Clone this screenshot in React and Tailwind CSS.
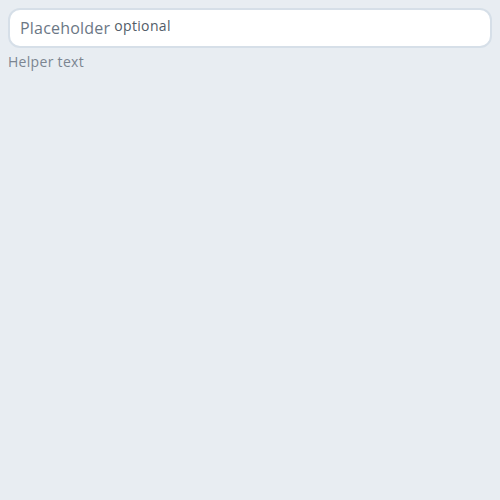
export default function App() {
  return (
    <div className="min-h-screen w-full bg-[#e8edf2] p-2 font-['Open_Sans',sans-serif]">
      <div className="flex h-[40px] items-center rounded-[12px] border-2 border-[#d6dfe8] bg-white px-[10px]">
        <span className="text-[16px] leading-none tracking-[0.2px] text-[#6b7785]">Placeholder</span>
        <span className="ml-[4px] -translate-y-[2px] text-[14px] leading-none tracking-[0.35px] text-[#525c68]">optional</span>
      </div>
      <p className="mt-[5px] text-[14px] leading-[18px] tracking-[0.3px] text-[#7b8591]">Helper text</p>
    </div>
  )
}
